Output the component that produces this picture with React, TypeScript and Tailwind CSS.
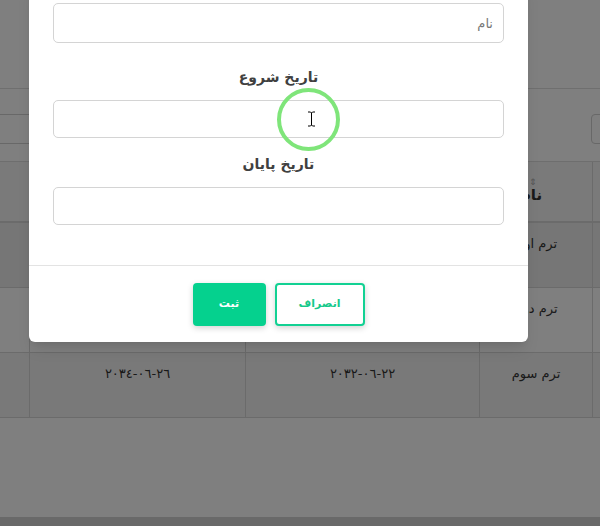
import React from 'react'

const rows = [
  { name: 'ترم اول', start: '', end: '', shade: 'bg-[#ececec]' },
  { name: 'ترم دوم', start: '', end: '', shade: 'bg-white' },
  { name: 'ترم سوم', start: '٢٠٣٢-٠٦-٢٢', end: '٢٠٣٤-٠٦-٢٦', shade: 'bg-[#f3f3f3]' },
]

function DateText({ value }: { value: string }) {
  return (
    <span dir="ltr" className="[unicode-bidi:bidi-override] text-[13px] text-[#333]">
      {value}
    </span>
  )
}

function BackgroundPage() {
  return (
    <div dir="rtl" className="flex h-[526px] flex-col bg-white">
      <div className="h-[89px] border-b border-[#dedede]" />
      <div className="flex h-[72px] items-start justify-between pt-[25px]">
        <div className="mr-[-9px] h-[30px] w-[18px] rounded border border-[#d0d0d0]" />
        <div className="ml-[-20px] h-[30px] w-[300px] rounded border border-[#d0d0d0]" />
      </div>
      <div className="grid grid-cols-[8px_113px_234px_216px_29px] border-t border-[#dcdcdc]">
        <div className="h-[61px] border-b-2 border-l border-[#d6d6d6] bg-[#f4f4f4]" />
        <div className="relative flex h-[61px] items-center justify-center border-b-2 border-l border-[#d6d6d6] bg-[#f4f4f4] pr-[10px] pt-[8px]">
          <span className="absolute left-[49px] top-[16px] text-[9px] leading-none text-[#a8a8a8]">⇕</span>
          <span className="text-[15px] font-bold text-[#333]">نام</span>
        </div>
        <div className="h-[61px] border-b-2 border-l border-[#d6d6d6] bg-[#f4f4f4]" />
        <div className="h-[61px] border-b-2 border-l border-[#d6d6d6] bg-[#f4f4f4]" />
        <div className="h-[61px] border-b-2 border-[#d6d6d6] bg-[#f4f4f4]" />
        {rows.map((r) => (
          <React.Fragment key={r.name}>
            <div className={`h-[65px] border-b border-l border-[#d6d6d6] ${r.shade}`} />
            <div className={`flex h-[65px] justify-center border-b border-l border-[#d6d6d6] pt-[11px] ${r.shade}`}>
              <span className="text-[13px] text-[#333]">{r.name}</span>
            </div>
            <div className={`flex h-[65px] justify-center border-b border-l border-[#d6d6d6] pt-[11px] ${r.shade}`}>
              {r.start && <DateText value={r.start} />}
            </div>
            <div className={`flex h-[65px] justify-center border-b border-l border-[#d6d6d6] pt-[11px] ${r.shade}`}>
              {r.end && <DateText value={r.end} />}
            </div>
            <div className={`h-[65px] border-b border-[#d6d6d6] ${r.shade}`} />
          </React.Fragment>
        ))}
      </div>
      <div className="mt-auto h-[9px] bg-[#d2d2d2]" />
    </div>
  )
}

function IBeam() {
  return (
    <svg width="9" height="16" viewBox="0 0 9 16" className="absolute left-[307px] top-[111px]">
      <path d="M1 1h2.5l1 1 1-1H8M4.5 2v12M1 15h2.5l1-1 1 1H8" fill="none" stroke="#fff" strokeWidth="2.5" />
      <path d="M1 1h2.5l1 1 1-1H8M4.5 2v12M1 15h2.5l1-1 1 1H8" fill="none" stroke="#000" strokeWidth="1" />
    </svg>
  )
}

function Modal() {
  return (
    <div dir="rtl" className="absolute left-[29px] top-[-20px] w-[499px] rounded-md bg-white shadow-lg">
      <div className="px-6 pt-[23px] pb-[40px]">
        <input
          placeholder="نام"
          className="block h-[40px] w-full rounded-[5px] border border-[#d4d4d4] px-[10px] text-[13px] text-[#555] outline-none placeholder:text-[#777]"
        />
        <div className="mt-[22px] mb-[11px] h-[24px] text-center text-[14px] font-bold leading-[24px] text-[#404040]">
          تاریخ شروع
        </div>
        <input className="block h-[38px] w-full rounded-[5px] border border-[#d4d4d4] outline-none" />
        <div className="mt-[14px] mb-[11px] h-[24px] text-center text-[14px] font-bold leading-[24px] text-[#404040]">
          تاریخ پایان
        </div>
        <input className="block h-[38px] w-full rounded-[5px] border border-[#d4d4d4] outline-none" />
      </div>
      <div className="flex justify-center gap-[9px] border-t border-[#e3e3e3] pt-[17px] pb-[16px]">
        <button className="h-[43px] w-[90px] rounded-[4px] border-2 border-[#12d193] bg-white text-[11px] font-bold text-[#17c98b] shadow-[0_2px_6px_rgba(0,0,0,0.18)]">
          انصراف
        </button>
        <button className="h-[43px] w-[73px] rounded-[4px] bg-[#05d18e] text-[11px] font-bold text-white shadow-[0_2px_6px_rgba(0,0,0,0.18)]">
          ثبت
        </button>
      </div>
    </div>
  )
}

export default function App() {
  return (
    <div className="relative h-[526px] w-[600px] overflow-hidden font-['DejaVu_Sans',sans-serif]">
      <BackgroundPage />
      <div className="absolute inset-0 bg-black/50">
        <Modal />
        <div className="absolute left-[277px] top-[88px] h-[63px] w-[63px] rounded-full border-[4px] border-[#7fe57a]" />
        <IBeam />
      </div>
    </div>
  )
}
